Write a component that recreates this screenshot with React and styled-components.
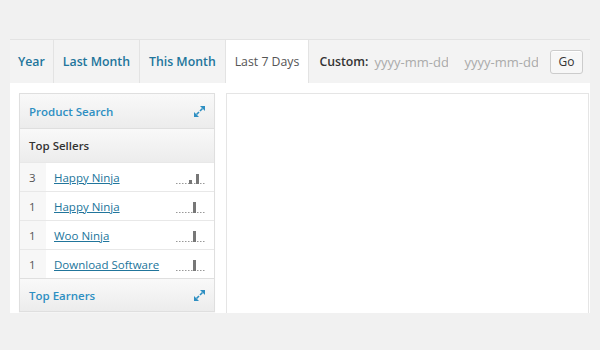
import React from "react";
import styled, { createGlobalStyle } from "styled-components";

const GlobalStyle = createGlobalStyle`
	body {
		margin: 0;
		background: #f1f1f1;
		font-family: "Open Sans", "Liberation Sans", sans-serif;
		font-size: 13px;
		color: #333;
	}
`;

const Page = styled.div`
	padding: 39px 10px 0 10px;
`;

const Report = styled.div`
	width: 580px;
`;

const TabBar = styled.div`
	display: flex;
	height: 44px;
	border-top: 1px solid #e3e3e3;
	box-sizing: border-box;
	background: #f3f3f3;
	font-size: 12.3px;
`;

const Tab = styled.a`
	display: flex;
	align-items: center;
	padding: 0 ${(p) => p.$pad || "9px"};
	border-right: 1px solid #e3e3e3;
	background: ${(p) => (p.$active ? "#fff" : "transparent")};
	color: ${(p) => (p.$active ? "#555" : "#21759b")};
	font-weight: ${(p) => (p.$active ? 400 : 600)};
	text-decoration: none;
	white-space: nowrap;
`;

const Custom = styled.div`
	display: flex;
	align-items: center;
	flex: 1;
	padding-left: 10px;
`;

const CustomLabel = styled.span`
	font-weight: 600;
	color: #333;
	margin-right: 6px;
`;

const DateInput = styled.input`
	width: 74px;
	flex: none;
	border: none;
	background: transparent;
	font-family: inherit;
	font-size: 13px;
	color: #333;
	padding: 0;
	margin-right: ${(p) => p.$gap || "0"};
	outline: none;

	&::placeholder {
		color: #aaa;
	}
`;

const GoButton = styled.button`
	flex: none;
	margin-left: auto;
	margin-right: 7px;
	width: 33px;
	height: 24px;
	padding: 0;
	border: 1px solid #ccc;
	border-radius: 3px;
	background: #f7f7f7;
	box-shadow: inset 0 1px 0 #fff;
	font-family: inherit;
	font-size: 12px;
	color: #333;
`;

const Body = styled.div`
	display: flex;
	gap: 11px;
	background: #fff;
	padding: 10px 0 0 9px;
	height: 230px;
	box-sizing: border-box;
`;

const Sidebar = styled.div`
	width: 196px;
	align-self: flex-start;
	border: 1px solid #dfdfdf;
	box-sizing: border-box;
	box-shadow: 0 1px 1px rgba(0, 0, 0, 0.04);
	font-size: 11.5px;
`;

const WidgetHead = styled.div`
	display: flex;
	align-items: center;
	justify-content: space-between;
	height: ${(p) => p.$h || "34px"};
	padding: 0 9px 0 9px;
	background: linear-gradient(#f9f9f9, #ececec);
	border-top: ${(p) => (p.$first ? "none" : "1px solid #dfdfdf")};
	box-sizing: border-box;
	font-weight: 600;
	color: ${(p) => (p.$link ? "#2e8fc2" : "#333")};
`;

const Row = styled.div`
	display: flex;
	align-items: center;
	height: 29px;
	border-top: 1px solid #e8e8e8;
	box-sizing: border-box;
	background: #fff;
`;

const Count = styled.span`
	width: 26px;
	align-self: stretch;
	display: flex;
	align-items: center;
	padding-left: 9px;
	box-sizing: border-box;
	background: #f7f7f7;
	color: #555;
`;

const ProductLink = styled.a`
	flex: 1;
	padding-left: 8px;
	color: #21759b;
	text-decoration: underline;
	white-space: nowrap;
`;

const Spark = styled.svg`
	margin-right: 8px;
	flex: none;
`;

const Chart = styled.div`
	flex: 1;
	margin-right: 1px;
	border: 1px solid #e5e5e5;
	border-bottom: none;
	background: #fff;
`;

const ExpandIcon = () => (
	<svg width="11" height="11" viewBox="0 0 11 11">
		<path d="M11 0 L11 5 L6 0 Z" fill="#2e8fc2" />
		<path d="M8.5 2.5 L6 5" stroke="#2e8fc2" strokeWidth="1.6" />
		<path d="M0 11 L0 6 L5 11 Z" fill="#2e8fc2" />
		<path d="M2.5 8.5 L5 6" stroke="#2e8fc2" strokeWidth="1.6" />
	</svg>
);

const Sparkline = ({ bars }) => (
	<Spark width="30" height="14" viewBox="0 0 30 14">
		<line x1="0" y1="13.5" x2="30" y2="13.5" stroke="#999" strokeWidth="1" strokeDasharray="1.5 1.5" />
		{bars.map(([x, h]) => (
			<rect key={x} x={x} y={14 - h} width="3" height={h} fill="#777" />
		))}
	</Spark>
);

const sellers = [
	{ qty: 3, name: "Happy Ninja", bars: [[13, 4], [20, 10]] },
	{ qty: 1, name: "Happy Ninja", bars: [[17, 11]] },
	{ qty: 1, name: "Woo Ninja", bars: [[17, 11]] },
	{ qty: 1, name: "Download Software", bars: [[17, 11]] },
];

const App = () => (
	<Page>
		<GlobalStyle />
		<Report>
			<TabBar>
				<Tab $pad="8px">Year</Tab>
				<Tab>Last Month</Tab>
				<Tab>This Month</Tab>
				<Tab $active>Last 7 Days</Tab>
				<Custom>
					<CustomLabel>Custom:</CustomLabel>
					<DateInput placeholder="yyyy-mm-dd" $gap="16px" />
					<DateInput placeholder="yyyy-mm-dd" />
					<GoButton>Go</GoButton>
				</Custom>
			</TabBar>
			<Body>
				<Sidebar>
					<WidgetHead $first $link>
						Product Search
						<ExpandIcon />
					</WidgetHead>
					<WidgetHead>Top Sellers</WidgetHead>
					{sellers.map((s, i) => (
						<Row key={i}>
							<Count>{s.qty}</Count>
							<ProductLink>{s.name}</ProductLink>
							<Sparkline bars={s.bars} />
						</Row>
					))}
					<WidgetHead $link $h="33px">
						Top Earners
						<ExpandIcon />
					</WidgetHead>
				</Sidebar>
				<Chart />
			</Body>
		</Report>
	</Page>
);

export default App;
